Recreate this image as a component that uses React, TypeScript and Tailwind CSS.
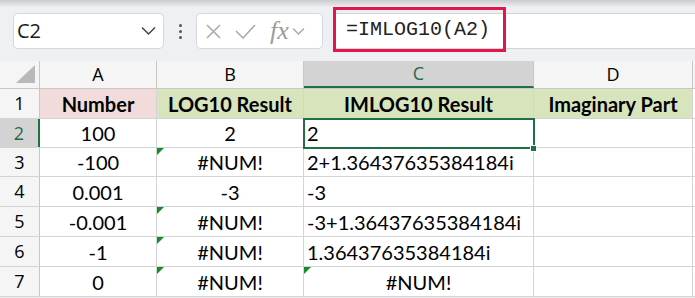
import React from 'react';

const cols = ['A', 'B', 'C', 'D'];

type Cell = { v: string; align?: 'left' | 'center'; flag?: boolean };

const rows: Cell[][] = [
  [{ v: '100' }, { v: '2' }, { v: '2', align: 'left' }, { v: '' }],
  [{ v: '-100' }, { v: '#NUM!', flag: true }, { v: '2+1.36437635384184i', align: 'left' }, { v: '' }],
  [{ v: '0.001' }, { v: '-3' }, { v: '-3', align: 'left' }, { v: '' }],
  [{ v: '-0.001' }, { v: '#NUM!', flag: true }, { v: '-3+1.36437635384184i', align: 'left' }, { v: '' }],
  [{ v: '-1' }, { v: '#NUM!', flag: true }, { v: '1.36437635384184i', align: 'left' }, { v: '' }],
  [{ v: '0' }, { v: '#NUM!', flag: true }, { v: '#NUM!', flag: true }, { v: '' }],
];

const rowHeights = ['h-[29px]', 'h-[29px]', 'h-[30px]', 'h-[30px]', 'h-[30px]', 'h-[30px]'];

const Flag = () => (
  <span className="absolute left-0 top-0 w-0 h-0 border-t-[7px] border-t-[#128c2c] border-r-[7px] border-r-transparent" />
);

export default function App() {
  return (
    <div className="w-[695px] h-[298px] overflow-hidden bg-[#eef0f3] relative" style={{ fontFamily: 'Lato, sans-serif' }}>
      {/* toolbar */}
      <div className="h-[61px] relative bg-gradient-to-b from-[#c9cbce] via-[#eef0f3] via-[12%] to-[#eef0f3]">
        <div className="flex items-center pt-[13px] pl-[13px]">
          {/* name box */}
          <div className="w-[151px] h-[36px] bg-white rounded-[5px] border border-[#d5d7da] flex items-center justify-between pl-[3px] pr-[7px]">
            <span className="text-[20px] text-[#1b1b1b]" style={{ fontFamily: '"Open Sans", sans-serif' }}>C2</span>
            <svg width="15" height="10" viewBox="0 0 15 10" fill="none" stroke="#444" strokeWidth="1.5">
              <path d="M1 1.5 L7.5 8 L14 1.5" />
            </svg>
          </div>
          {/* dots */}
          <div className="w-[32px] flex flex-col items-center gap-[3px]">
            <span className="w-[3px] h-[3px] rounded-full bg-[#555]" />
            <span className="w-[3px] h-[3px] rounded-full bg-[#555]" />
            <span className="w-[3px] h-[3px] rounded-full bg-[#555]" />
          </div>
          {/* fx box */}
          <div className="w-[127px] h-[36px] bg-white rounded-[5px] border border-[#d5d7da] flex items-center pl-[9px] gap-[14px]">
            <svg width="15" height="15" viewBox="0 0 15 15" stroke="#a8a8a8" strokeWidth="1.5">
              <path d="M1 1 L14 14 M14 1 L1 14" />
            </svg>
            <svg width="21" height="15" viewBox="0 0 21 15" fill="none" stroke="#a8a8a8" strokeWidth="1.5">
              <path d="M1 7 L8 14 L20 1" />
            </svg>
            <div className="flex items-center gap-[3px]">
              <span className="text-[26px] italic text-[#9c9c9c] leading-none" style={{ fontFamily: '"Liberation Serif", serif' }}>fx</span>
              <svg width="13" height="8" viewBox="0 0 13 8" fill="none" stroke="#a8a8a8" strokeWidth="1.4">
                <path d="M1 1.5 L6.5 7 L12 1.5" />
              </svg>
            </div>
          </div>
          {/* formula bar */}
          <div className="ml-[10px] flex-1 h-[36px] bg-white border-y border-[#d2d4d7]" />
        </div>
        {/* highlighted formula */}
        <div className="absolute left-[333px] top-[7px] w-[173px] h-[45px] border-[3px] border-[#e0174c] flex items-center pl-[10px]">
          <span className="text-[20px] text-[#222]" style={{ fontFamily: '"Liberation Mono", monospace' }}>=IMLOG10(A2)</span>
        </div>
      </div>

      {/* grid */}
      <div className="bg-white">
        {/* column headers */}
        <div className="flex h-[28px] bg-[#f5f5f5] border-b border-[#c8c8c8]" style={{ fontFamily: '"Open Sans", sans-serif' }}>
          <div className="w-[40px] border-r border-[#c8c8c8] relative">
            <span className="absolute right-[4px] bottom-[5px] w-0 h-0 border-l-[19px] border-l-transparent border-b-[18px] border-b-[#b9b9b9]" />
          </div>
          {cols.map((c, i) => (
            <div
              key={c}
              className={`flex items-center justify-center text-[18px] border-r border-[#c8c8c8] ${
                i === 0 ? 'w-[117px]' : i === 1 ? 'w-[147px]' : i === 2 ? 'w-[230px] bg-[#d3d3d3] text-[#1e6b45] border-b-2 border-b-[#1f7145]' : 'w-[159px]'
              }`}
            >
              {c}
            </div>
          ))}
        </div>

        {/* row 1 headers */}
        <div className="flex h-[30px] border-b border-[#d4d4d4] text-[20px] font-bold">
          <div className="w-[40px] bg-[#f5f5f5] border-r border-[#c8c8c8] flex items-center justify-center text-[18px] font-normal" style={{ fontFamily: '"Open Sans", sans-serif' }}>1</div>
          <div className="w-[117px] bg-[#f2dcdb] border-r border-[#d4d4d4] flex items-center justify-center">Number</div>
          <div className="w-[147px] bg-[#d8e4bc] border-r border-[#d4d4d4] flex items-center justify-center">LOG10 Result</div>
          <div className="w-[230px] bg-[#d8e4bc] border-r border-[#d4d4d4] flex items-center justify-center">IMLOG10 Result</div>
          <div className="w-[159px] bg-[#d8e4bc] border-r border-[#d4d4d4] flex items-center justify-center">Imaginary Part</div>
        </div>

        {rows.map((r, ri) => (
          <div key={ri} className={`flex border-b border-[#d4d4d4] ${rowHeights[ri]}`}>
            <div
              className={`w-[40px] border-r flex items-center justify-center text-[18px] ${
                ri === 0 ? 'bg-[#d3d3d3] text-[#1e6b45] border-r-2 border-r-[#1f7145]' : 'bg-[#f5f5f5] border-[#c8c8c8]'
              }`}
              style={{ fontFamily: '"Open Sans", sans-serif' }}
            >
              {ri + 2}
            </div>
            {r.map((cell, ci) => (
              <div
                key={ci}
                className={`relative border-r border-[#d4d4d4] flex items-center text-[20px] ${
                  ci === 0 ? 'w-[117px]' : ci === 1 ? 'w-[147px]' : ci === 2 ? 'w-[230px]' : 'w-[159px]'
                } ${cell.align === 'left' ? 'justify-start pl-[3px]' : 'justify-center'}`}
              >
                {cell.flag && <Flag />}
                {cell.v}
              </div>
            ))}
          </div>
        ))}
      </div>

      {/* active cell C2 */}
      <div className="absolute left-[303px] top-[118px] w-[232px] h-[31px] border-2 border-[#1f7145]" />
      <div className="absolute left-[530px] top-[145px] w-[7px] h-[7px] bg-[#1f7145] border border-white" />
    </div>
  );
}
